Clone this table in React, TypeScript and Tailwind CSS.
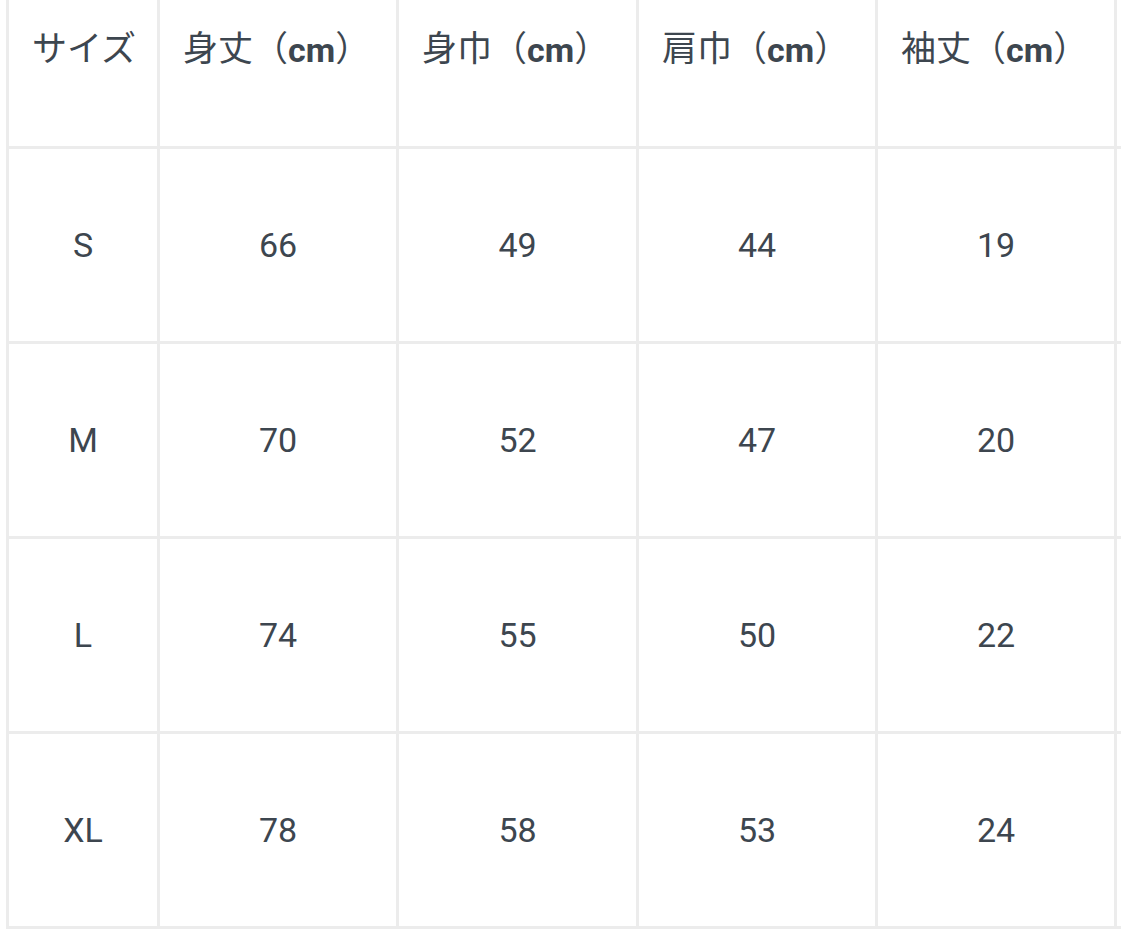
import React from "react";

const headers = ["サイズ", "身丈", "身巾", "肩巾", "袖丈", ""];

const rows = [
  ["S", "66", "49", "44", "19", ""],
  ["M", "70", "52", "47", "20", ""],
  ["L", "74", "55", "50", "22", ""],
  ["XL", "78", "58", "53", "24", ""],
];

export default function App() {
  return (
    <div
      className="w-[1121px] h-[929px] overflow-hidden bg-white text-[#3d464f]"
      style={{ fontFamily: "Roboto, 'Noto Sans CJK JP', sans-serif" }}
    >
      {/* table is scrolled so its top border sits above the viewport */}
      <div className="-mt-[49px] ml-[6px] w-max">
        <div className="grid grid-cols-[148px_236px_237px_236px_236px_236px] auto-rows-[192px] gap-[3px] p-[3px] bg-[#ececec]">
          {headers.map((h, i) => (
            <div
              key={`h${i}`}
              className="bg-white flex items-center pl-[23px] text-[35px] whitespace-nowrap"
            >
              {h}
              {i > 0 && h && (
                <>
                  （<span className="font-bold text-[34px]">cm</span>）
                </>
              )}
            </div>
          ))}
          {rows.map((r, ri) =>
            r.map((c, ci) => (
              <div
                key={`${ri}-${ci}`}
                className="bg-white flex items-center justify-center text-[34px]"
              >
                {c}
              </div>
            ))
          )}
        </div>
      </div>
    </div>
  );
}
